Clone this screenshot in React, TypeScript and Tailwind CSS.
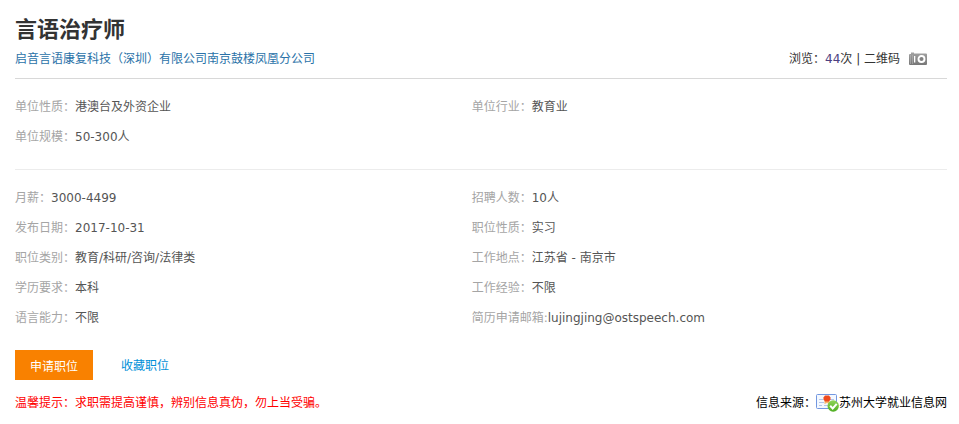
import type { ReactNode } from "react";

type Field = { label: string; value: string };

const companyFields: Field[] = [
  { label: "单位性质：", value: "港澳台及外资企业" },
  { label: "单位行业：", value: "教育业" },
  { label: "单位规模：", value: "50-300人" },
];

const jobFields: Field[] = [
  { label: "月薪：", value: "3000-4499" },
  { label: "招聘人数：", value: "10人" },
  { label: "发布日期：", value: "2017-10-31" },
  { label: "职位性质：", value: "实习" },
  { label: "职位类别：", value: "教育/科研/咨询/法律类" },
  { label: "工作地点：", value: "江苏省 - 南京市" },
  { label: "学历要求：", value: "本科" },
  { label: "工作经验：", value: "不限" },
  { label: "语言能力：", value: "不限" },
  { label: "简历申请邮箱:", value: "lujingjing@ostspeech.com" },
];

function CameraIcon() {
  return (
    <svg width="18" height="14" viewBox="0 0 18 14" aria-hidden="true">
      <defs>
        <linearGradient id="camera-body" x1="0" y1="0" x2="0" y2="1">
          <stop offset="0" stopColor="#a3a3a3" />
          <stop offset="1" stopColor="#777" />
        </linearGradient>
      </defs>
      <path d="M2 0.500h3v1h12a1 1 0 0 1 1 1v9.500a1 1 0 0 1-1 1H1a1 1 0 0 1-1-1v-9a1 1 0 0 1 1-1h1z" fill="url(#camera-body)" />
      <path d="M1.500 3v9M3.500 3v9" stroke="#b5b5b5" strokeWidth="0.600" />
      <rect x="5" y="4" width="1.300" height="6.500" fill="#fff" />
      <circle cx="12.500" cy="7" r="3" fill="#808080" stroke="#fff" strokeWidth="1.900" />
    </svg>
  );
}

function LicenseIcon() {
  return (
    <svg width="23" height="18" viewBox="0 0 23 18" aria-hidden="true">
      <defs>
        <linearGradient id="check-disc" x1="0" y1="0" x2="0" y2="1">
          <stop offset="0" stopColor="#8fd45a" />
          <stop offset="1" stopColor="#4fae22" />
        </linearGradient>
      </defs>
      <rect x="0.500" y="0.500" width="20" height="14" rx="1" fill="#f3f8ff" stroke="#7397e0" />
      <path d="M3 5.500h4M3 8.500h5M14 5.500h4M14 8.500h4M3 11.500h3M8 11.500h4" stroke="#b4c6e8" />
      <path d="M8.500 7h5v3l-2.500-1-2.500 1z" fill="#f8b56d" />
      <path d="M9 1.500h4l1.500 2v2L13 7.500H9l-1.500-2v-2z" fill="#ee4b20" />
      <circle cx="17.200" cy="12" r="5.700" fill="url(#check-disc)" />
      <path d="M14.200 11.800l2.500 2.600 4-4.600" fill="none" stroke="#fff" strokeWidth="2" />
    </svg>
  );
}

function FieldList({ fields }: { fields: Field[] }) {
  return (
    <dl className="grid grid-cols-[49%_51%] leading-[30px]">
      {fields.map((f) => (
        <div key={f.label} className="flex">
          <dt className="text-[#a5a5a5]">{f.label}</dt>
          <dd className="text-[#555]">{f.value}</dd>
        </div>
      ))}
    </dl>
  );
}

function Section({ children }: { children: ReactNode }) {
  return <section className="border-b border-[#ececec] pt-[13px] pb-[17px]">{children}</section>;
}

export default function App() {
  return (
    <main className="bg-white pt-[13px] pr-3 pb-3 pl-[15px] text-xs text-black font-['DejaVu_Sans','Noto_Sans_CJK_SC',sans-serif]">
      {/* 标题与公司 */}
      <header className="border-b border-[#d8d8d8] pb-[7px]">
        <h1 className="text-[22px] leading-[34px] font-bold text-[#333]">言语治疗师</h1>
        <div className="flex items-center justify-between leading-6">
          <a href="#company" className="text-[#2a72a8]">
            启音言语康复科技（深圳）有限公司南京鼓楼凤凰分公司
          </a>
          <div className="flex items-center pr-5 text-[#333]">
            <span>
              浏览：<span className="text-[#4c4080]">44</span>次 | 二维码
            </span>
            <button type="button" aria-label="二维码" className="ml-[9px]">
              <CameraIcon />
            </button>
          </div>
        </div>
      </header>

      {/* 单位信息 */}
      <Section>
        <FieldList fields={companyFields} />
      </Section>

      {/* 职位信息 */}
      <section className="pt-[13px]">
        <FieldList fields={jobFields} />
      </section>

      <div className="mt-[17px] flex leading-[30px]">
        <button type="button" className="h-[30px] bg-[#f98100] px-[15px] pt-0.5 text-white">
          申请职位
        </button>
        <a href="#favorite" className="ml-7 pt-px text-[#0090d8]">
          收藏职位
        </a>
      </div>

      <footer className="mt-3 flex items-center justify-between leading-5">
        <p className="text-[#f00]">温馨提示：求职需提高谨慎，辨别信息真伪，勿上当受骗。</p>
        <p className="flex items-center">
          信息来源：
          <LicenseIcon />
          苏州大学就业信息网
        </p>
      </footer>
    </main>
  );
}
